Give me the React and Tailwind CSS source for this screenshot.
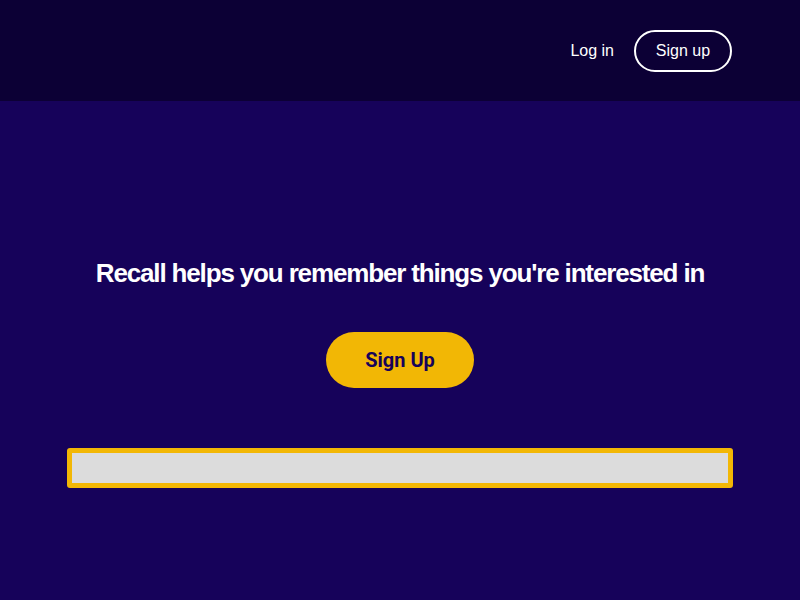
import React from 'react';

const Header = () => (
    <header className="h-[101px] bg-[#0c0035] flex items-center justify-end pr-[68px] gap-5">
        <a href="#" className="text-white text-base font-['Liberation_Sans',Arial,sans-serif]">Log in</a>
        <button className="h-[42px] w-[98px] rounded-full border-2 border-white text-white text-base font-['Liberation_Sans',Arial,sans-serif]">
            Sign up
        </button>
    </header>
);

export default function App() {
    return (
        <div className="min-h-[600px] bg-[#16025a] flex flex-col">
            <Header />
            <main className="flex-1 flex flex-col items-center pt-[157px]">
                <h1 className="text-white text-[26px] leading-[31px] font-bold tracking-[-1.15px] font-['Liberation_Sans',Arial,sans-serif]">
                    Recall helps you remember things you're interested in
                </h1>
                <button className="mt-[43px] h-[56px] w-[148px] rounded-full bg-[#f2b705] text-[#16025a] text-[20px] font-bold font-['Roboto',sans-serif]">
                    Sign Up
                </button>
                <input
                    type="text"
                    className="mt-[60px] w-[666px] h-[40px] bg-[#dcdcdc] border-[5px] border-[#f2b705] rounded-[3px] outline-none"
                />
            </main>
        </div>
    );
}
